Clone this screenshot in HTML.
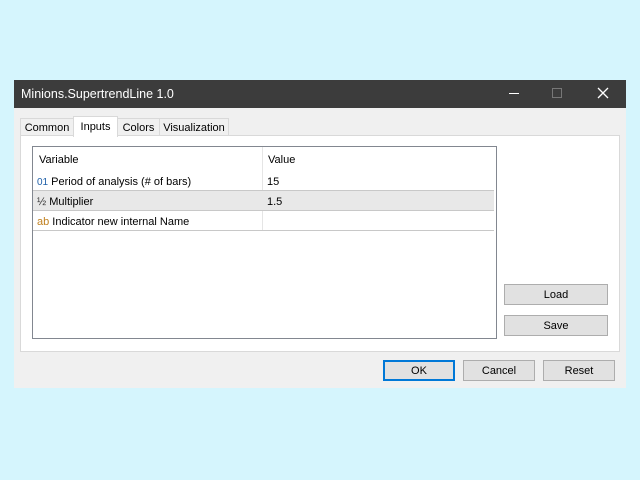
<!DOCTYPE html><html><head><style>
body{margin:0;width:640px;height:480px;background:#d5f5fd;font-family:"Liberation Sans",sans-serif;font-size:11px;color:#000;position:relative;overflow:hidden}
div{position:absolute;box-sizing:border-box}
.btn{background:#e1e1e1;border:1px solid #adadad;text-align:center;line-height:20px}
.t{white-space:nowrap}
</style></head><body>
<div style="left:14px;top:80px;width:612px;height:308px;background:#f0f0f0"></div>
<div style="left:14px;top:80px;width:612px;height:28px;background:#3c3c3c;color:#fff;font-size:12.5px;line-height:29px;padding-left:7px" class="t">Minions.SupertrendLine 1.0</div>
<div style="left:509px;top:93px;width:10px;height:1px;background:#fff"></div>
<div style="left:552px;top:88px;width:10px;height:10px;border:1px solid #777"></div>
<svg style="position:absolute;left:597px;top:87px" width="12" height="12"><path d="M1 1L11 11M11 1L1 11" stroke="#fff" stroke-width="1.3"/></svg>
<div style="left:20px;top:135px;width:600px;height:217px;background:#fff;border:1px solid #d9d9d9"></div>
<div style="left:20px;top:118px;width:54px;height:18px;border:1px solid #d9d9d9;background:#f0f0f0;line-height:19px;text-align:center">Common</div>
<div style="left:73px;top:116px;width:45px;height:21px;border:1px solid #d9d9d9;border-bottom:none;background:#fff;line-height:20px;text-align:center">Inputs</div>
<div style="left:117px;top:118px;width:43px;height:18px;border:1px solid #d9d9d9;background:#f0f0f0;line-height:19px;text-align:center">Colors</div>
<div style="left:159px;top:118px;width:70px;height:18px;border:1px solid #d9d9d9;background:#f0f0f0;line-height:19px;text-align:center">Visualization</div>
<div style="left:32px;top:146px;width:465px;height:193px;border:1px solid #828790;background:#fff"></div>
<div style="left:262px;top:147px;width:1px;height:84px;background:#e5e5e5"></div>
<div style="left:33px;top:191px;width:461px;height:20px;background:#e8e8e8"></div>
<div style="left:33px;top:190px;width:461px;height:1px;background:#c8c8c8"></div>
<div style="left:33px;top:210px;width:461px;height:1px;background:#c8c8c8"></div>
<div style="left:33px;top:230px;width:461px;height:1px;background:#c8c8c8"></div>
<div class="t" style="left:39px;top:154px">Variable</div>
<div class="t" style="left:268px;top:154px">Value</div>
<div class="t" style="left:37px;top:176px"><span style="color:#1e5fa8;font-size:10px">01</span> Period of analysis (# of bars)</div>
<div class="t" style="left:267px;top:176px">15</div>
<div class="t" style="left:37px;top:196px"><span style="color:#333">½</span> Multiplier</div>
<div class="t" style="left:267px;top:196px">1.5</div>
<div class="t" style="left:37px;top:216px"><span style="color:#c08020">ab</span> Indicator new internal Name</div>
<div class="btn" style="left:504px;top:284px;width:104px;height:21px">Load</div>
<div class="btn" style="left:504px;top:315px;width:104px;height:21px">Save</div>
<div class="btn" style="left:383px;top:360px;width:72px;height:21px;border:2px solid #0078d7;line-height:18px">OK</div>
<div class="btn" style="left:463px;top:360px;width:72px;height:21px">Cancel</div>
<div class="btn" style="left:543px;top:360px;width:72px;height:21px">Reset</div>
</body></html>
